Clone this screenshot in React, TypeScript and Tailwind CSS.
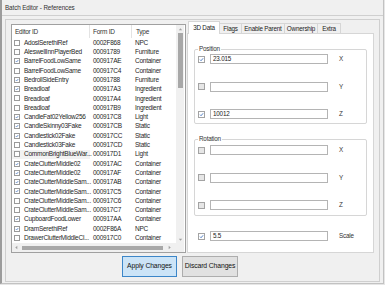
import React from 'react';

type Row = { id: string; form: string; type: string; on: boolean; hl?: boolean };

const ROWS: Row[] = [
  { id: 'AdoslSerethiRef', form: '0002F868', type: 'NPC', on: false },
  { id: 'AleswellInnPlayerBed', form: '00091789', type: 'Furniture', on: false },
  { id: 'BarrelFoodLowSame', form: '000917AE', type: 'Container', on: true },
  { id: 'BarrelFoodLowSame', form: '000917C4', type: 'Container', on: false },
  { id: 'BedrollSideEntry', form: '00091788', type: 'Furniture', on: true },
  { id: 'Breadloaf', form: '000917A3', type: 'Ingredient', on: true },
  { id: 'Breadloaf', form: '000917A4', type: 'Ingredient', on: false },
  { id: 'Breadloaf', form: '000917B9', type: 'Ingredient', on: false },
  { id: 'CandleFat02Yellow256', form: '000917C8', type: 'Light', on: true },
  { id: 'CandleSkinny03Fake', form: '000917CB', type: 'Static', on: true },
  { id: 'Candlestick02Fake', form: '000917CC', type: 'Static', on: true },
  { id: 'Candlestick03Fake', form: '000917CD', type: 'Static', on: false },
  { id: 'CommonBrightBlueWar...', form: '000917D1', type: 'Light', on: false, hl: true },
  { id: 'CrateClutterMiddle02', form: '000917AC', type: 'Container', on: true },
  { id: 'CrateClutterMiddle02', form: '000917AF', type: 'Container', on: true },
  { id: 'CrateClutterMiddleSam...', form: '000917AB', type: 'Container', on: true },
  { id: 'CrateClutterMiddleSam...', form: '000917C5', type: 'Container', on: true },
  { id: 'CrateClutterMiddleSam...', form: '000917C6', type: 'Container', on: false },
  { id: 'CrateClutterMiddleSam...', form: '000917C7', type: 'Container', on: false },
  { id: 'CupboardFoodLower', form: '000917AA', type: 'Container', on: true },
  { id: 'DramSerethiRef', form: '0002F86A', type: 'NPC', on: true },
  { id: 'DrawerClutterMiddleCl...', form: '000917C0', type: 'Container', on: false },
];

const TABS = [
  { label: 'Flags', w: 'w-[23px]' },
  { label: 'Enable Parent', w: 'w-[44px]' },
  { label: 'Ownership', w: 'w-[34px]' },
  { label: 'Extra', w: 'w-[24px]' },
];

const Tick = () => (
  <svg viewBox="0 0 10 10" className="w-full h-full">
    <path d="M2 5.3 L4.1 7.4 L8.2 2.6" fill="none" stroke="#2a62b8" strokeWidth="1.6" />
  </svg>
);

const ListCheck = ({ on }: { on: boolean }) => (
  <div className="w-[6px] h-[6px] border border-[#9a9a9a] bg-white shrink-0">{on && <Tick />}</div>
);

const FieldRow = ({ on, value, label }: { on: boolean; value: string; label: string }) => (
  <div className="flex items-center h-[10px]">
    <div className={`w-[7px] h-[7px] border border-[#a3a3a3] shrink-0 ${on ? 'bg-white' : 'bg-[#e6e6e6]'}`}>
      {on && <Tick />}
    </div>
    <div className="ml-[5px] w-[118px] h-[10px] border border-[#b4b4b4] bg-white flex items-center pl-[2px] text-[#1a1a1a]">
      {value}
    </div>
    <span className="ml-[11px] text-[#333]">{label}</span>
  </div>
);

const Group = ({ title, children }: { title: string; children: React.ReactNode }) => (
  <div className="relative border border-[#d6d6d6] rounded-[2px] pl-[3px] flex flex-col gap-[17.5px]">
    <span className="absolute -top-[5px] left-[3px] bg-white px-[1px] leading-[8px] text-[#333]">{title}</span>
    {children}
  </div>
);

const Arrow = ({ dir }: { dir: 'up' | 'down' | 'left' | 'right' }) => {
  const pts = {
    up: '1,4 3,1.5 5,4',
    down: '1,2 3,4.5 5,2',
    left: '4,1 1.5,3 4,5',
    right: '2,1 4.5,3 2,5',
  }[dir];
  return (
    <svg viewBox="0 0 6 6" className="w-[5px] h-[5px]">
      <polygon points={pts} fill="#a0a0a0" />
    </svg>
  );
};

export default function App() {
  return (
    <div className="w-[385px] h-[285px] bg-[#e6e6e6] font-['Liberation_Sans',Arial,sans-serif] text-[6.3px] tracking-[-0.2px] overflow-hidden">
      <div className="w-[384px] h-[284px] border-l-2 border-l-[#9c9c9c] border-r border-b border-r-[#c2c2c2] border-b-[#c2c2c2] bg-[#f0f0f0] flex flex-col">
        <div className="h-[16px] border-b border-[#cfcfcf] pl-[3px] flex items-center text-[6.3px] tracking-[-0.1px] text-[#333]">
          Batch Editor - References
        </div>

        <div className="mt-[3px] ml-[3px] w-[375px] h-[263px] border border-[#cfcfcf] flex flex-col">
          <div className="flex items-start h-[233px]">
            {/* list view */}
            <div className="mt-[4px] ml-[5px] w-[175px] h-[229px] border border-[#a0a0a0] bg-white flex flex-col">
              <div className="flex h-[218px]">
                <div className="w-[164px] flex flex-col text-[6.5px] tracking-[-0.25px]">
                  <div className="h-[13px] flex items-center text-[#333]">
                    <div className="w-[78px] h-full pl-[3px] flex items-center border-r border-[#e3e3e3]">Editor ID</div>
                    <div className="w-[42px] h-full pl-[3px] flex items-center border-r border-[#e3e3e3]">Form ID</div>
                    <div className="flex-1 pl-[4px]">Type</div>
                  </div>
                  {ROWS.map((r, i) => (
                    <div key={i} className="h-[9.3px] flex items-center text-[#1f1f1f]">
                      <div className={`w-[78px] h-full flex items-center pl-[2px] ${r.hl ? 'bg-[#f2f2f2]' : ''}`}>
                        <ListCheck on={r.on} />
                        <span className="ml-[4px] whitespace-nowrap">{r.id}</span>
                      </div>
                      <div className="w-[42px] pl-[3px]">{r.form}</div>
                      <div className="flex-1 pl-[3px]">{r.type}</div>
                    </div>
                  ))}
                </div>
                <div className="w-[8px] bg-[#f0f0f0] flex flex-col items-center">
                  <div className="h-[8px] flex items-center justify-center"><Arrow dir="up" /></div>
                  <div className="w-[5px] h-[55px] bg-[#a8a8a8]" />
                  <div className="flex-1" />
                  <div className="h-[8px] flex items-center justify-center"><Arrow dir="down" /></div>
                </div>
              </div>
              <div className="flex h-[9px]">
                <div className="w-[164px] bg-[#f0f0f0] flex items-center">
                  <div className="w-[9px] flex justify-center"><Arrow dir="left" /></div>
                  <div className="ml-[1px] w-[141px] h-[4px] bg-[#a8a8a8]" />
                  <div className="flex-1 flex justify-center"><Arrow dir="right" /></div>
                </div>
                <div className="w-[8px] bg-[#f0f0f0]" />
              </div>
            </div>

            {/* tab control */}
            <div className="mt-[1px] ml-[1px] w-[187px] flex flex-col">
              <div className="h-[12px] flex items-end pl-[1px] text-[#222]">
                <div className="relative z-10 w-[32px] h-[13px] -mb-px bg-white border border-b-0 border-[#d6d6d6] flex items-center justify-center whitespace-nowrap">
                  3D Data
                </div>
                {TABS.map((t) => (
                  <div key={t.label} className={`${t.w} h-[10px] -ml-px bg-[#f0f0f0] border border-b-0 border-[#d6d6d6] flex items-center justify-center whitespace-nowrap`}>
                    {t.label}
                  </div>
                ))}
              </div>
              <div className="h-[220px] border border-[#d6d6d6] bg-white px-[6px] flex flex-col">
                <div className="mt-[15px]">
                  <Group title="Position">
                    <div className="pt-[4px]"><FieldRow on value="23.015" label="X" /></div>
                    <FieldRow on={false} value="" label="Y" />
                    <div className="pb-[4px]"><FieldRow on value="10012" label="Z" /></div>
                  </Group>
                </div>
                <div className="mt-[15px]">
                  <Group title="Rotation">
                    <div className="pt-[5px]"><FieldRow on={false} value="" label="X" /></div>
                    <FieldRow on={false} value="" label="Y" />
                    <div className="pb-[5px]"><FieldRow on={false} value="" label="Z" /></div>
                  </Group>
                </div>
                <div className="mt-[15px] pl-[4px]">
                  <FieldRow on value="5.5" label="Scale" />
                </div>
              </div>
            </div>
          </div>

          <div className="mt-[3px] pl-[116px] flex gap-[5px] text-[6.8px] tracking-[-0.1px] text-[#111]">
            <button className="w-[55px] h-[21px] bg-[#cce4f7] border border-[#3c86c8] flex items-center justify-center whitespace-nowrap">
              Apply Changes
            </button>
            <button className="w-[56px] h-[21px] bg-[#e1e1e1] border border-[#adadad] flex items-center justify-center whitespace-nowrap">
              Discard Changes
            </button>
          </div>
        </div>
      </div>
    </div>
  );
}
